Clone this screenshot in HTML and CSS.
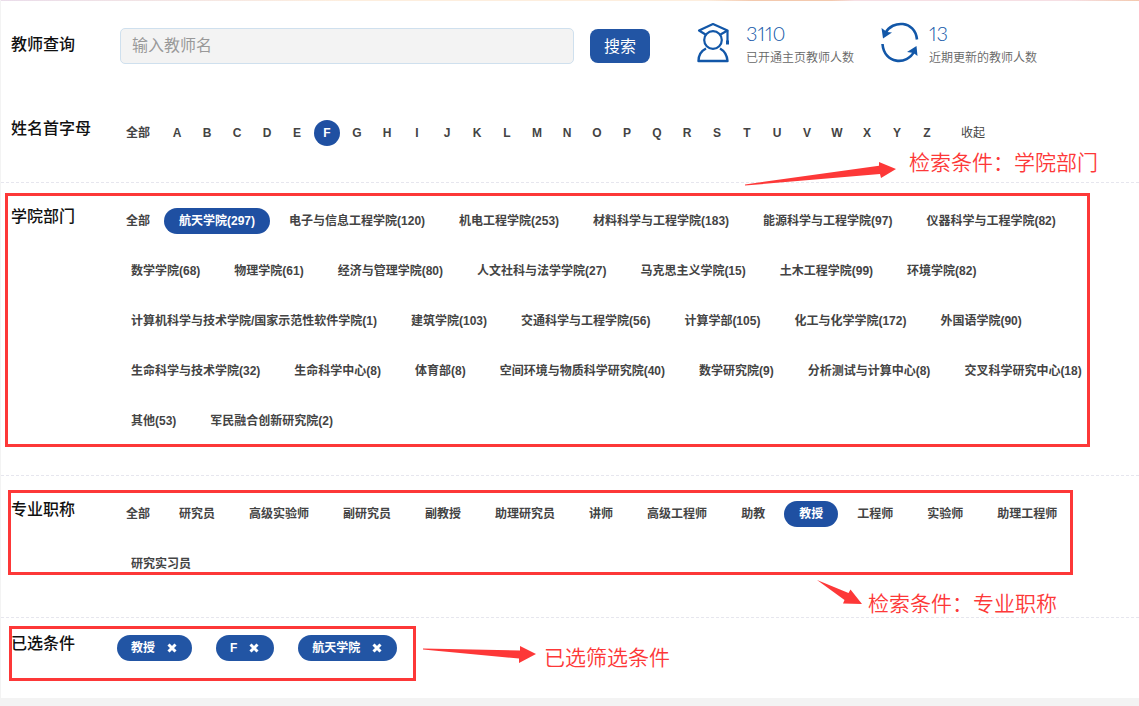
FILE: index.html
```html
<!DOCTYPE html>
<html lang="zh-CN">
<head>
<meta charset="utf-8">
<title>教师查询</title>
<link rel="stylesheet" href="styles.css">
</head>
<body>
<main class="page">
  <header class="search-bar">
    <label class="label" for="teacher">教师查询</label>
    <form class="search-form">
      <input class="search-input" id="teacher" type="text" placeholder="输入教师名">
      <button class="search-button" type="button">搜索</button>
    </form>
    <div class="stat stat-open">
      <svg class="stat-icon" width="34" height="42" viewBox="0 0 34 42" fill="none" stroke="#1257a8" stroke-width="2.200" stroke-linejoin="round">
        <path d="M9.500 13.500 3 9.500 17 3 31.500 9.500 24.500 13.500"/>
        <path d="M31.500 9.500V21"/>
        <path d="M31.500 19.500v4" stroke-width="3"/>
        <circle cx="17" cy="19" r="8.800"/>
        <path d="M10 27.500C5 30 2.500 34 2.500 40H31.500C31 34 28.500 30 24 27.500" stroke-width="2.400"/>
      </svg>
      <div class="stat-text"><strong class="stat-number">3110</strong><span class="stat-caption">已开通主页教师人数</span></div>
    </div>
    <div class="stat stat-recent">
      <svg class="stat-icon" width="38" height="42" viewBox="0 0 38 42" fill="none" stroke="#1257a8" stroke-width="2.600">
        <path d="M4.500 12C11-1 34-1 36 18.500"/>
        <path d="M1.500 23C3 43 26 45 33.500 30"/>
        <path d="M.5 7 2 17.500 11 11.500 6 11Z" fill="#1257a8" stroke="none"/>
        <path d="M35.500 25 36.500 35 32.500 32 26 31Z" fill="#1257a8" stroke="none"/>
      </svg>
      <div class="stat-text"><strong class="stat-number">13</strong><span class="stat-caption">近期更新的教师人数</span></div>
    </div>
  </header>

  <section class="filter filter-letters">
    <h2 class="label">姓名首字母</h2>
    <nav class="options">
      <a class="all" href="#">全部</a>
      <a class="letter" href="#">A</a><a class="letter" href="#">B</a><a class="letter" href="#">C</a><a class="letter" href="#">D</a><a class="letter" href="#">E</a><a class="letter active" href="#">F</a><a class="letter" href="#">G</a><a class="letter" href="#">H</a><a class="letter" href="#">I</a><a class="letter" href="#">J</a><a class="letter" href="#">K</a><a class="letter" href="#">L</a><a class="letter" href="#">M</a><a class="letter" href="#">N</a><a class="letter" href="#">O</a><a class="letter" href="#">P</a><a class="letter" href="#">Q</a><a class="letter" href="#">R</a><a class="letter" href="#">S</a><a class="letter" href="#">T</a><a class="letter" href="#">U</a><a class="letter" href="#">V</a><a class="letter" href="#">W</a><a class="letter" href="#">X</a><a class="letter" href="#">Y</a><a class="letter" href="#">Z</a>
      <button class="collapse" type="button">收起</button>
    </nav>
  </section>

  <section class="filter">
    <h2 class="label">学院部门</h2>
    <nav class="options">
      <a class="all" href="#">全部</a>
      <a class="option active" href="#">航天学院(297)</a>
      <a class="option" href="#">电子与信息工程学院(120)</a>
      <a class="option" href="#">机电工程学院(253)</a>
      <a class="option" href="#">材料科学与工程学院(183)</a>
      <a class="option" href="#">能源科学与工程学院(97)</a>
      <a class="option" href="#">仪器科学与工程学院(82)</a>
      <a class="option" href="#">数学学院(68)</a>
      <a class="option" href="#">物理学院(61)</a>
      <a class="option" href="#">经济与管理学院(80)</a>
      <a class="option" href="#">人文社科与法学学院(27)</a>
      <a class="option" href="#">马克思主义学院(15)</a>
      <a class="option" href="#">土木工程学院(99)</a>
      <a class="option" href="#">环境学院(82)</a>
      <a class="option" href="#">计算机科学与技术学院/国家示范性软件学院(1)</a>
      <a class="option" href="#">建筑学院(103)</a>
      <a class="option" href="#">交通科学与工程学院(56)</a>
      <a class="option" href="#">计算学部(105)</a>
      <a class="option" href="#">化工与化学学院(172)</a>
      <a class="option" href="#">外国语学院(90)</a>
      <a class="option" href="#">生命科学与技术学院(32)</a>
      <a class="option" href="#">生命科学中心(8)</a>
      <a class="option" href="#">体育部(8)</a>
      <a class="option" href="#">空间环境与物质科学研究院(40)</a>
      <a class="option" href="#">数学研究院(9)</a>
      <a class="option" href="#">分析测试与计算中心(8)</a>
      <a class="option" href="#">交叉科学研究中心(18)</a>
      <a class="option" href="#">其他(53)</a>
      <a class="option" href="#">军民融合创新研究院(2)</a>
    </nav>
    <div class="frame frame-dept"></div>
    <svg class="arrow arrow-dept" width="152" height="26" viewBox="0 0 152 26"><path d="M0 24.500V23.500L134 4.700V1L151 8 136 17 135 13Z"/></svg>
    <p class="note note-dept">检索条件：学院部门</p>
  </section>

  <section class="filter filter-titles">
    <h2 class="label">专业职称</h2>
    <nav class="options">
      <a class="all" href="#">全部</a>
      <a class="option" href="#">研究员</a>
      <a class="option" href="#">高级实验师</a>
      <a class="option" href="#">副研究员</a>
      <a class="option" href="#">副教授</a>
      <a class="option" href="#">助理研究员</a>
      <a class="option" href="#">讲师</a>
      <a class="option" href="#">高级工程师</a>
      <a class="option" href="#">助教</a>
      <a class="option active" href="#">教授</a>
      <a class="option" href="#">工程师</a>
      <a class="option" href="#">实验师</a>
      <a class="option" href="#">助理工程师</a>
      <a class="option" href="#">研究实习员</a>
    </nav>
    <div class="frame frame-title"></div>
    <svg class="arrow arrow-title" width="46" height="26" viewBox="0 0 46 26"><path d="M0 0 31.500 13 33.500 9.500 45 24 26 23.500 27.500 20Z"/></svg>
    <p class="note note-title">检索条件：专业职称</p>
  </section>

  <section class="filter filter-selected">
    <h2 class="label">已选条件</h2>
    <div class="selected">
      <button class="tag" type="button">教授<svg class="cross" width="10" height="10" viewBox="0 0 10 10"><path d="M1.500 1.500 8.500 8.500M8.500 1.500 1.500 8.500"/></svg></button>
      <button class="tag" type="button">F<svg class="cross" width="10" height="10" viewBox="0 0 10 10"><path d="M1.500 1.500 8.500 8.500M8.500 1.500 1.500 8.500"/></svg></button>
      <button class="tag" type="button">航天学院<svg class="cross" width="10" height="10" viewBox="0 0 10 10"><path d="M1.500 1.500 8.500 8.500M8.500 1.500 1.500 8.500"/></svg></button>
    </div>
    <div class="frame frame-selected"></div>
    <svg class="arrow arrow-selected" width="114" height="18" viewBox="0 0 114 18"><path d="M0 3.500V2.500L97 4.500V0L113 8 96 17V12.500Z"/></svg>
    <p class="note note-selected">已选筛选条件</p>
  </section>
</main>
</body>
</html>
```
FILE: styles.css
```css
* {
  box-sizing: border-box;
}

body {
  margin: 0;
  background: #f3f3f3;
  color: #444;
  font: 12px/26px "Liberation Sans", "Noto Sans CJK SC", sans-serif;
}

.page {
  border-left: 1px solid #f3f3f3;
  background: linear-gradient(to right, #eadcea, #fdeede 30%, #fdeede 62%, #f3c9ae 66%, #f3c9ae 73%, #f6dfe4 75%, #f6dfe4 94%, #f3c9ae) top / 100% 1px no-repeat #fff;
  overflow: hidden;
}

.label {
  flex: none;
  width: 105px;
  margin: 0;
  color: #111;
  font-size: 16px;
  font-weight: 500;
  line-height: 26px;
}

a {
  color: inherit;
  text-decoration: none;
}

button {
  border: 0;
  padding: 0;
  background: none;
  color: inherit;
  font: inherit;
  cursor: pointer;
}

.search-bar {
  display: flex;
  align-items: center;
  height: 92px;
  padding-left: 10px;
}

.search-bar .label {
  width: 109px;
  padding-bottom: 2px;
}

.search-form {
  display: flex;
  align-items: center;
  gap: 16px;
}

.search-input {
  width: 454px;
  height: 36px;
  padding: 0 11px;
  border: 1px solid #cfe0ee;
  border-radius: 5px;
  background: #f3f3f3;
  color: #333;
  font: 16px/24px "Liberation Sans", "Noto Sans CJK SC", sans-serif;
}

.search-input::placeholder {
  color: #999;
}

.search-button {
  width: 60px;
  height: 34px;
  padding-top: 2px;
  border-radius: 8px;
  background: #2255a4;
  color: #fff;
  font-size: 16px;
}

.stat {
  display: flex;
  align-items: flex-start;
  gap: 16px;
}

.stat-open {
  margin-left: 46px;
}

.stat-recent {
  gap: 10px;
  margin-left: 27px;
}

.stat-icon {
  flex: none;
}

.stat-text {
  display: flex;
  flex-direction: column;
}

.stat-number {
  color: #1257a8;
  font: 300 20px/24px Lato, sans-serif;
  font-variant-numeric: proportional-nums;
}

.stat-caption {
  color: #666;
  font-weight: 350;
  line-height: 26px;
  white-space: nowrap;
}

.filter {
  position: relative;
  display: flex;
  align-items: flex-start;
  padding: 21px 0 41px 10px;
  border-bottom: 1px dashed #e6e6ee;
}

.filter-letters {
  padding: 24px 0 36px 10px;
}

.filter-titles {
  padding-bottom: 40px;
}

.filter-selected {
  padding: 13px 0 37px 10px;
  border-bottom: 0;
}

.options {
  display: flex;
  flex: 1;
  flex-wrap: wrap;
  gap: 24px 4px;
  padding-top: 4px;
  font-weight: 700;
}

.all {
  padding: 0 10px;
}

.letter {
  width: 26px;
  border-radius: 13px;
  text-align: center;
}

.option {
  padding: 0 15px;
  border-radius: 13px;
  white-space: nowrap;
}

.active {
  background: #1f50a2;
  color: #fff;
}

.collapse {
  padding: 0 17px;
  font-weight: 400;
}

.selected {
  display: flex;
  gap: 24px;
  padding: 4px 0 0 1px;
}

.tag {
  display: flex;
  align-items: center;
  gap: 12px;
  padding: 0 15px 0 14px;
  border-radius: 13px;
  background: #2255a4;
  color: #fff;
  font-weight: 700;
}

.cross {
  fill: none;
  stroke: #fff;
  stroke-width: 3;
}

/* Red call-outs laid over the filters */
.frame,
.arrow,
.note {
  position: absolute;
  pointer-events: none;
}

.frame {
  border: 3px solid #fd3838;
}

.arrow {
  fill: #fd3838;
}

.note {
  margin: 0;
  color: #fd3838;
  font-size: 21px;
  font-weight: 350;
  line-height: 30px;
  white-space: nowrap;
}

.frame-dept {
  top: 10px;
  left: 4px;
  width: 1085px;
  height: 254px;
}

.arrow-dept {
  top: -22px;
  left: 744px;
}

.note-dept {
  top: -35px;
  left: 908px;
}

.frame-title {
  top: 14px;
  left: 7px;
  width: 1065px;
  height: 85px;
}

.arrow-title {
  top: 104px;
  left: 816px;
}

.note-title {
  top: 113px;
  left: 867px;
}

.frame-selected {
  top: 8px;
  left: 8px;
  width: 407px;
  height: 55px;
}

.arrow-selected {
  top: 28px;
  left: 422px;
}

.note-selected {
  top: 25px;
  left: 543px;
}
```
